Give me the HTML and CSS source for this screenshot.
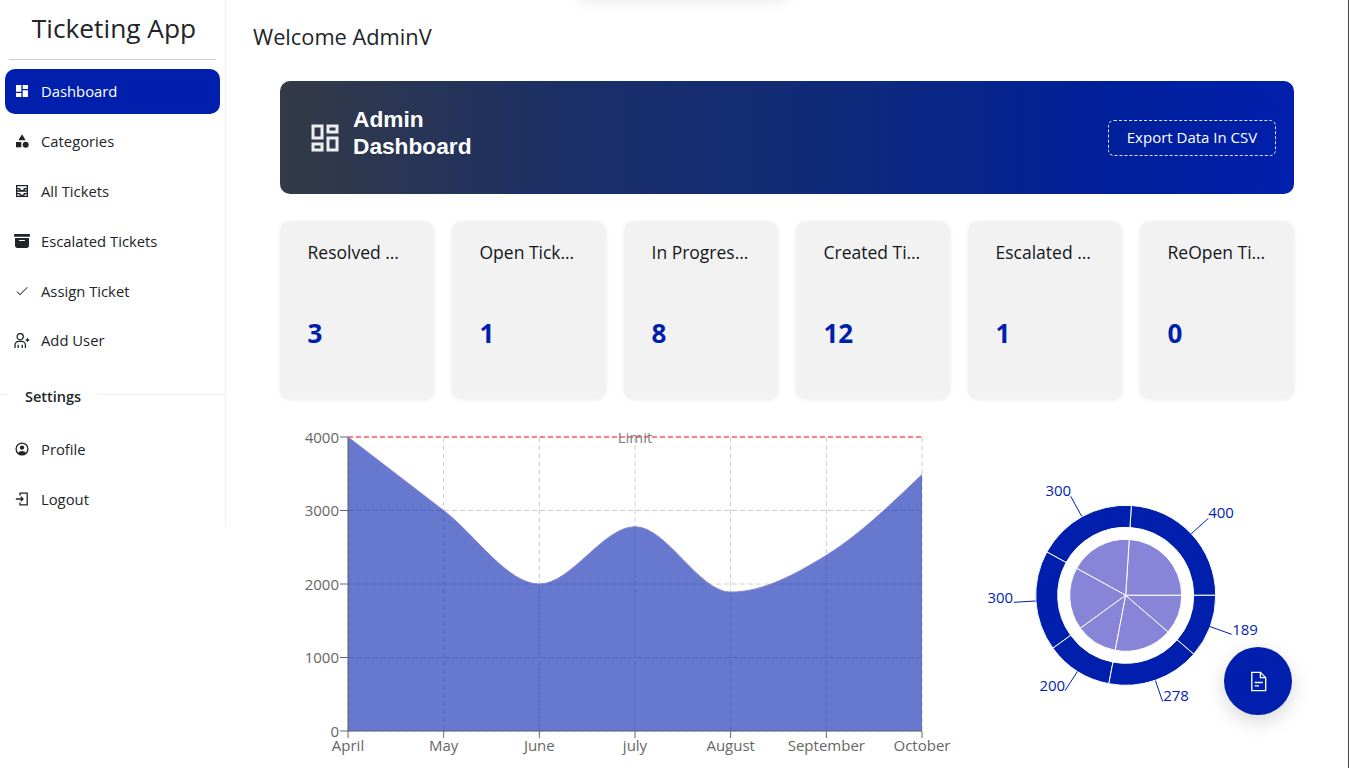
FILE: index.html
```html
<!DOCTYPE html>
<html lang="en">
<head>
<meta charset="utf-8">
<title>Ticketing App</title>
<link rel="stylesheet" href="styles.css">
</head>
<body>
<div class="popup-shadow"></div>
<div class="app">
  <aside class="sidebar">
    <h1 class="brand">Ticketing App</h1>
    <hr class="brand-rule">
    <nav class="nav">
      <a class="nav-item active"><svg class="nav-icon" viewBox="0 0 24 24"><path d="M3 13h8V3H3v10zm0 8h8v-6H3v6zm10 0h8V11h-8v10zm0-18v6h8V3h-8z"/></svg><span>Dashboard</span></a>
      <a class="nav-item"><svg class="nav-icon" viewBox="0 0 24 24"><path d="M12 2l-5.500 9h11z"/><circle cx="17.500" cy="17.500" r="4.500"/><path d="M3 13.500h8v8H3z"/></svg><span>Categories</span></a>
      <a class="nav-item"><svg class="nav-icon" viewBox="0 0 24 24"><g class="inbox-icon"><path d="M4 4h16v16H4zM4 12h16"/><path d="M4 8.500h4.500c0 1.800 1.500 3 3.500 3s3.500-1.200 3.500-3H20M4 16h4.500c0 1.500 1.500 2.500 3.500 2.500s3.500-1 3.500-2.500H20"/></g></svg><span>All Tickets</span></a>
      <a class="nav-item"><svg class="nav-icon" viewBox="0 0 16 16"><path d="M12.643 15C13.979 15 15 13.845 15 12.500V5H1v7.500C1 13.845 2.021 15 3.357 15h9.286zM5.500 7h5a.5.5 0 0 1 0 1h-5a.5.5 0 0 1 0-1zM.8 1a.8.8 0 0 0-.8.8V3a.8.8 0 0 0 .8.8h14.400A.8.8 0 0 0 16 3V1.800a.8.8 0 0 0-.8-.8H.8z"/></svg><span>Escalated Tickets</span></a>
      <a class="nav-item"><svg class="nav-icon" viewBox="0 0 24 24"><path d="M9 16.600 4.600 12.200l-.9.9L9 18.400 20.600 6.800l-.9-.9z"/></svg><span>Assign Ticket</span></a>
      <a class="nav-item nav-item-tight"><svg class="nav-icon" viewBox="0 0 16 16"><g class="line-icon"><circle cx="6.200" cy="3.700" r="3.100"/><path d="M1 15v-3a3.700 3.700 0 0 1 3.700-3.700h3a3.700 3.700 0 0 1 3.700 3.700v3M4.200 15v-3.200M8.300 15v-3.200"/><path d="M13.500 5.200v3.600M11.700 7h3.600"/></g></svg><span>Add User</span></a>
    </nav>
    <div class="section-rule"><span>Settings</span></div>
    <nav class="nav">
      <a class="nav-item"><svg class="nav-icon" viewBox="0 0 16 16"><circle class="line-icon" cx="8" cy="8" r="5.900"/><circle cx="8" cy="6.600" r="2.200"/><path d="M3.800 12.200c1-1.600 2.500-2.300 4.200-2.300s3.200.7 4.200 2.300C11 13.400 9.600 14 8 14s-3-.6-4.200-1.800z"/></svg><span>Profile</span></a>
      <a class="nav-item"><svg class="nav-icon" viewBox="0 0 16 16"><g class="line-icon"><path d="M6 4.500V2.200h7.200v11.600H6v-2.300"/><path d="M1.800 8h7M6.800 5.800 9 8l-2.200 2.200"/></g></svg><span>Logout</span></a>
    </nav>
  </aside>

  <main class="main">
    <h2 class="welcome">Welcome AdminV</h2>
    <div class="content">
      <section class="banner">
        <div class="banner-title">
          <svg class="banner-icon" viewBox="0 0 24 24"><path d="M19 5v2h-4V5h4M9 5v6H5V5h4m10 8v6h-4v-6h4M9 17v2H5v-2h4M21 3h-8v6h8V3zM11 3H3v10h8V3zm10 8h-8v10h8V11zm-10 4H3v6h8v-6z"/></svg>
          <h3>Admin<br>Dashboard</h3>
        </div>
        <button class="export">Export Data In CSV</button>
      </section>

      <section class="cards">
        <article class="card"><p class="card-title">Resolved Tickets</p><p class="card-value">3</p></article>
        <article class="card"><p class="card-title">Open Tickets</p><p class="card-value">1</p></article>
        <article class="card"><p class="card-title">In Progress Tickets</p><p class="card-value">8</p></article>
        <article class="card"><p class="card-title">Created Tickets</p><p class="card-value">12</p></article>
        <article class="card"><p class="card-title">Escalated Tickets</p><p class="card-value">1</p></article>
        <article class="card"><p class="card-title">ReOpen Tickets</p><p class="card-value">0</p></article>
      </section>

      <section class="charts">
        <svg class="area-chart" width="680" height="343" viewBox="280 425 680 343">
          <g class="grid">
            <path d="M348 731H922M348 657.500H922M348 584H922M348 510.500H922"/>
            <path d="M348 437V731M443.670 437V731M539.330 437V731M635 437V731M730.670 437V731M826.330 437V731M922 437V731"/>
          </g>
          <path class="limit" d="M348 437H922"/>
          <path class="area-fill" d="M348 437C379.890 461.500 411.780 486 443.670 510.500C475.560 535 507.440 584 539.330 584C571.220 584 603.110 526.700 635 526.700C666.890 526.700 698.780 592.100 730.670 592.100C762.560 592.100 794.440 574.900 826.330 555.300C858.220 535.700 890.110 505.100 922 474.500V731H348Z"/>
          <path class="area-edge" d="M348 437C379.890 461.500 411.780 486 443.670 510.500C475.560 535 507.440 584 539.330 584C571.220 584 603.110 526.700 635 526.700C666.890 526.700 698.780 592.100 730.670 592.100C762.560 592.100 794.440 574.900 826.330 555.300C858.220 535.700 890.110 505.100 922 474.500"/>
          <g class="axis">
            <path d="M348 437V731H922"/>
            <path d="M340 437H348M340 510.500H348M340 584H348M340 657.500H348M340 731H348"/>
            <path d="M348 731V738M443.670 731V738M539.330 731V738M635 731V738M730.670 731V738M826.330 731V738M922 731V738"/>
          </g>
          <text class="limit-label" x="635" y="442.500">Limit</text>
          <g class="tick-y">
            <text x="339" y="442.500">4000</text>
            <text x="339" y="516">3000</text>
            <text x="339" y="589.500">2000</text>
            <text x="339" y="663">1000</text>
            <text x="339" y="736.500">0</text>
          </g>
          <g class="tick-x">
            <text x="348" y="751">April</text>
            <text x="443.670" y="751">May</text>
            <text x="539.330" y="751">June</text>
            <text x="635" y="751">july</text>
            <text x="730.670" y="751">August</text>
            <text x="826.330" y="751">September</text>
            <text x="922" y="751">October</text>
          </g>
        </svg>

        <svg class="pie-chart" width="334" height="343" viewBox="960 425 334 343">
          <g transform="translate(1125.700 595.300)">
            <g class="inner-pie">
              <path d="M0 0L56 0A56 56 0 0 0 3.520 -55.890Z"/>
              <path d="M0 0L3.520 -55.890A56 56 0 0 0 -49.070 -26.980Z"/>
              <path d="M0 0L-49.070 -26.980A56 56 0 0 0 -45.300 32.920Z"/>
              <path d="M0 0L-45.300 32.920A56 56 0 0 0 -10.490 55.010Z"/>
              <path d="M0 0L-10.490 55.010A56 56 0 0 0 42.390 36.590Z"/>
              <path d="M0 0L42.390 36.590A56 56 0 0 0 56 0Z"/>
            </g>
            <g class="outer-pie">
              <path d="M90 0A90 90 0 0 0 5.650 -89.820L4.270 -67.860A68 68 0 0 1 68 0Z"/>
              <path d="M5.650 -89.820A90 90 0 0 0 -78.870 -43.360L-59.590 -32.760A68 68 0 0 1 4.270 -67.860Z"/>
              <path d="M-78.870 -43.360A90 90 0 0 0 -72.810 52.900L-55.010 39.970A68 68 0 0 1 -59.590 -32.760Z"/>
              <path d="M-72.810 52.900A90 90 0 0 0 -16.870 88.410L-12.740 66.800A68 68 0 0 1 -55.010 39.970Z"/>
              <path d="M-16.870 88.410A90 90 0 0 0 68.130 58.810L51.480 44.430A68 68 0 0 1 -12.740 66.800Z"/>
              <path d="M68.130 58.810A90 90 0 0 0 90 0L68 0A68 68 0 0 1 51.480 44.430Z"/>
            </g>
            <g class="pie-leaders">
              <path d="M65.600 -61.600L82.700 -77"/>
              <path d="M-44 -79L-55 -99"/>
              <path d="M-90 5.700L-112 7"/>
              <path d="M-48.300 76.300L-60.700 95.300"/>
              <path d="M29.700 85.300L37 106.300"/>
              <path d="M84.300 31.300L106 39"/>
            </g>
            <g class="pie-labels">
              <text x="82.500" y="-77.500">400</text>
              <text class="end" x="-54.500" y="-99">300</text>
              <text class="end" x="-112.500" y="7.500">300</text>
              <text class="end" x="-60.500" y="95.500">200</text>
              <text x="37.500" y="106">278</text>
              <text x="106.500" y="39.500">189</text>
            </g>
          </g>
        </svg>
      </section>
    </div>
  </main>
</div>
<button class="fab" aria-label="Report"><svg viewBox="0 0 24 24"><g class="fab-icon"><path d="M5 2.500h9l5.500 5.500v13.500H5z"/><path d="M14 2.500V8h5.500"/><path d="M8 13h8.500M8 16.500h4.500"/></g></svg></button>
</body>
</html>
```
FILE: styles.css
```css
* { box-sizing: border-box; }
html, body { margin: 0; height: 768px; overflow: hidden; }
body {
  background: #fff;
  color: #212529;
  font-family: "Open Sans", "Noto Sans", sans-serif;
  border-right: 1px solid #444;
  position: relative;
}
.popup-shadow {
  position: absolute;
  left: 578px;
  top: -30px;
  width: 209px;
  height: 30px;
  box-shadow: 0 0 14px rgba(0, 0, 0, .11);
}
.app { display: flex; align-items: flex-start; }

.sidebar {
  width: 226px;
  height: 527px;
  flex: none;
  border-right: 1px solid #f0f0f0;
  display: flex;
  flex-direction: column;
}
.brand {
  margin: 9px 0 0;
  padding-left: 3px;
  height: 38px;
  line-height: 38px;
  text-align: center;
  font-size: 26.300px;
  font-weight: 400;
}
.brand-rule { margin: 12px 9px 9px; border: 0; border-top: 1px solid #ccc; }
.nav { display: flex; flex-direction: column; padding: 0 5px; }
.nav-item {
  height: 45px;
  margin-bottom: 5px;
  display: flex;
  align-items: center;
  gap: 11px;
  padding-left: 9px;
  border-radius: 10px;
  font-size: 14.800px;
  color: #212529;
}
.nav-item span { padding-bottom: 2px; }
.nav-item-tight span { padding-bottom: 3px; }
.nav-item.active { background: #001fad; color: #fff; }
.nav-item.active span { padding-bottom: 1px; }
.nav-icon { width: 16px; height: 16px; flex: none; fill: currentColor; margin-top: -2px; }
.line-icon { fill: none; stroke: currentColor; stroke-width: 1.300; }
.inbox-icon { fill: none; stroke: currentColor; stroke-width: 2; }
.section-rule {
  margin-top: 5px;
  height: 45px;
  display: flex;
  align-items: center;
  background: linear-gradient(#f0f0f0, #f0f0f0) 0 20px / 100% 1px no-repeat;
}
.section-rule span {
  margin-left: 7px;
  padding: 2px 17px 0 18px;
  background: #fff;
  font-size: 14.500px;
  font-weight: 600;
}
.section-rule + .nav { margin-top: 11px; }

.main { flex: 1; min-width: 0; }
.welcome {
  margin: 22px 0 0 27px;
  height: 30px;
  line-height: 30px;
  font-size: 21.800px;
  font-weight: 400;
}
.content { margin: 29px 54px 0 54px; }
.banner {
  height: 113px;
  border-radius: 10px;
  background: linear-gradient(90deg, #343a46 0%, #1b2f66 28%, #0f2a78 54%, #01209a 81%, #001fad 100%);
  color: #fff;
  display: flex;
  align-items: center;
  justify-content: space-between;
  padding: 0 18px 0 27px;
}
.banner-title { display: flex; align-items: center; gap: 10px; }
.banner-icon { width: 36px; height: 36px; fill: #eee; }
.banner h3 {
  margin: 0 0 10px;
  font: 700 22.700px/27px "Liberation Sans", Arial, sans-serif;
}
.export {
  width: 168px;
  height: 36px;
  border: 1px dashed #dfe3f2;
  border-radius: 6px;
  background: transparent;
  color: #fff;
  font: 400 15px "Open Sans", sans-serif;
  padding: 0 0 2px;
}
.cards {
  margin-top: 27px;
  display: grid;
  grid-template-columns: repeat(6, 154px);
  gap: 18px;
}
.card {
  height: 178px;
  padding: 18px 27.500px 0;
  background: #f2f2f2;
  border-radius: 10px;
  box-shadow: 0 1px 4px rgba(0, 0, 0, .08);
}
.card-title {
  margin: 0;
  height: 26px;
  line-height: 26px;
  font-size: 17.500px;
  font-weight: 500;
  color: #14171a;
  white-space: nowrap;
  overflow: hidden;
  text-overflow: ellipsis;
}
.card-value {
  margin: 48px 0 0;
  height: 40px;
  line-height: 40px;
  font-size: 26px;
  font-weight: 700;
  color: #001fad;
}
.charts { margin-top: 26px; display: flex; }
.area-chart, .pie-chart { display: block; flex: none; }
.grid path { fill: none; stroke: #ccc; stroke-dasharray: 5 3; }
.limit { fill: none; stroke: #f00; stroke-dasharray: 5 3; }
.area-fill { fill: #001fad; fill-opacity: .6; }
.area-edge { fill: none; stroke: #8884d8; }
.axis path { fill: none; stroke: #666; }
.limit-label { fill: #808080; font-size: 15px; text-anchor: middle; }
.tick-y text { fill: #666; font-size: 15px; text-anchor: end; }
.tick-x text { fill: #666; font-size: 15px; text-anchor: middle; }
.inner-pie path { fill: #8884d8; stroke: #fff; }
.outer-pie path { fill: #001fad; stroke: #fff; }
.pie-leaders path { fill: none; stroke: #001fad; }
.pie-labels text { fill: #001fad; font-size: 15px; }
.pie-labels .end { text-anchor: end; }
.fab {
  position: absolute;
  left: 1224px;
  top: 647px;
  width: 68px;
  height: 68px;
  border: 0;
  padding: 0;
  border-radius: 50%;
  background: #001fad;
  box-shadow: 0 6px 20px rgba(0, 0, 0, .16);
  display: flex;
  align-items: center;
  justify-content: center;
}
.fab svg { width: 23px; height: 23px; }
.fab-icon { fill: none; stroke: #fff; stroke-width: 1.400; }
```
